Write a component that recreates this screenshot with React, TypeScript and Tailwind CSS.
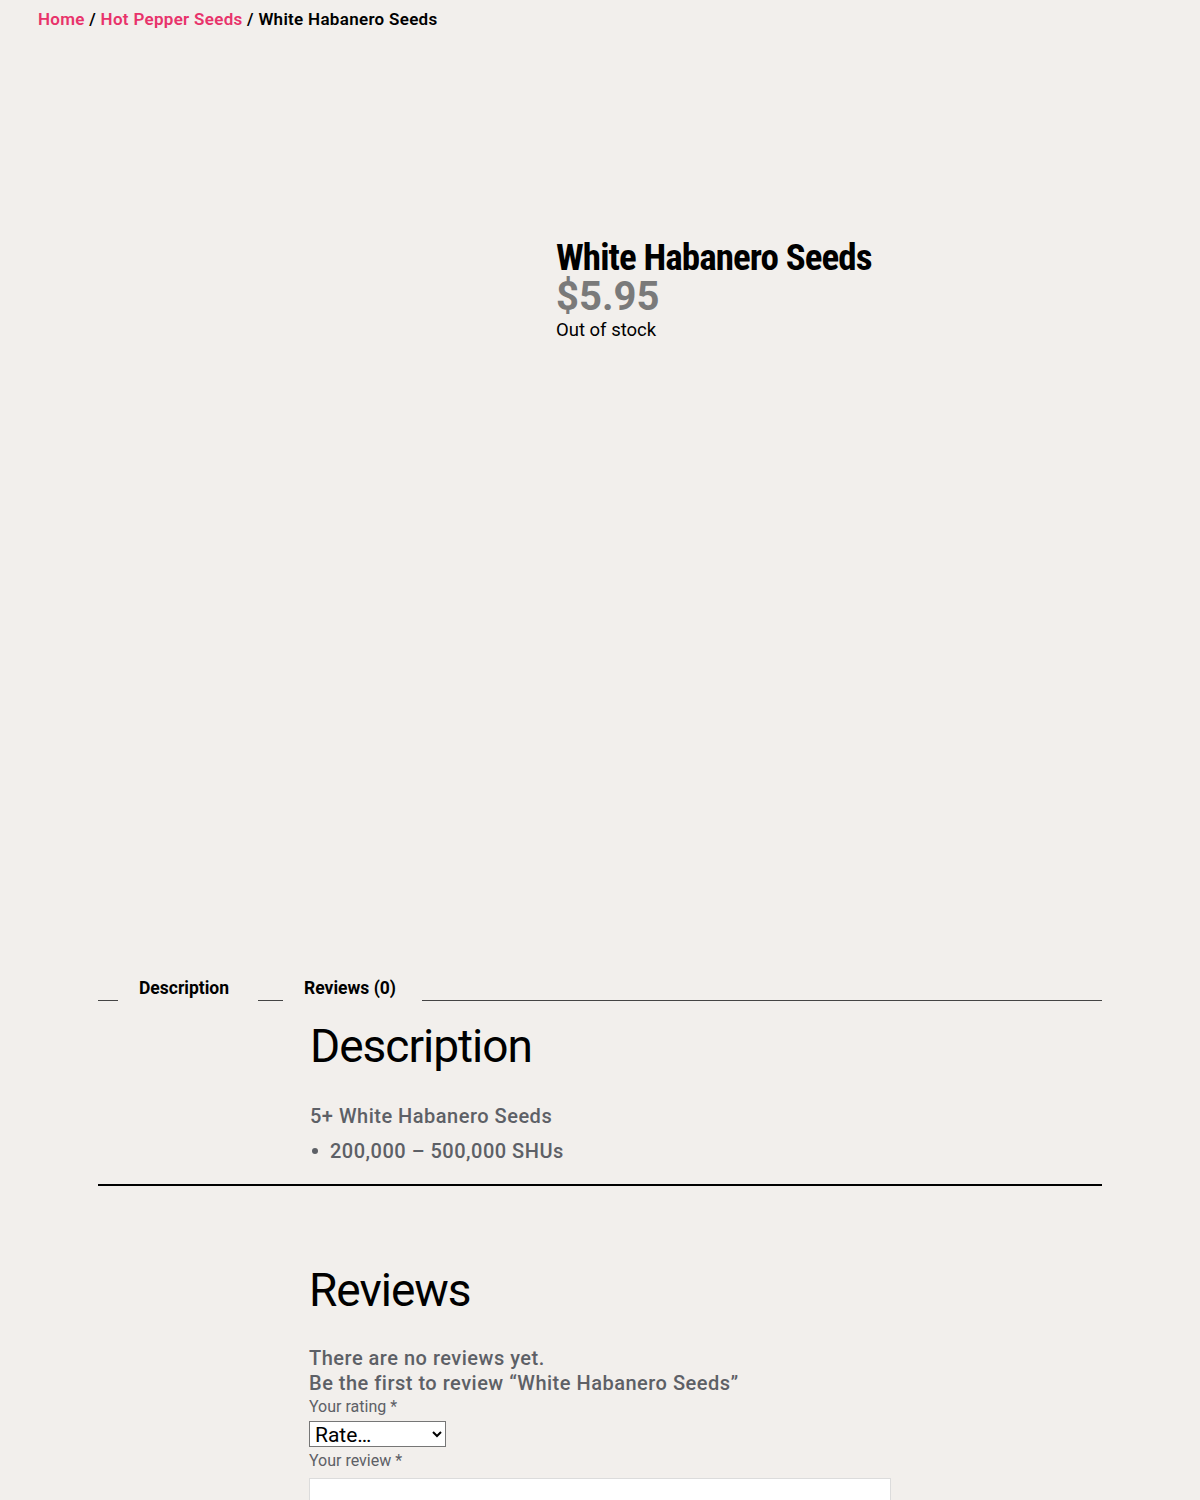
export default function App() {
  const body = { fontFamily: "Roboto, 'Liberation Sans', sans-serif" };
  return (
    <div className="min-h-[1500px] bg-[#f2efec] text-black" style={body}>
      <nav className="px-[38px] pt-[8px] text-[17px] font-semibold leading-[22px] tracking-[0.3px]">
        <a className="text-[#e8336b]">Home</a> / <a className="text-[#e8336b]">Hot Pepper Seeds</a> /{" "}
        <span>White Habanero Seeds</span>
      </nav>

      <section className="flex h-[947px] pt-[209px]">
        <div className="w-[556px] shrink-0" />
        <div>
          <h1
            className="text-[37px] font-bold leading-[38px] tracking-[-0.9px]"
            style={{ fontFamily: "'Liberation Sans Narrow', 'Roboto Condensed', 'Liberation Sans', sans-serif" }}
          >
            White Habanero Seeds
          </h1>
          <p className="text-[40px] font-bold leading-[40px] text-[#7a7a7a]">$5.95</p>
          <p className="mt-[1px] text-[18.5px] leading-[24px]">Out of stock</p>
        </div>
      </section>

      <div className="mx-[98px]">
        <ul className="flex items-end text-[17.5px] font-bold leading-[22px]">
          <li className="w-[20px] border-b border-[#444]" />
          <li className="w-[140px] pb-[2px] pl-[21px]">Description</li>
          <li className="w-[25px] border-b border-[#444]" />
          <li className="w-[139px] pb-[2px] pl-[21px]">Reviews (0)</li>
          <li className="flex-1 border-b border-[#444]" />
        </ul>

        <div className="border-b-2 border-black pb-[20px] pl-[212px]">
          <h2 className="mt-[18px] text-[46px] leading-[54px] tracking-[-1px]">Description</h2>
          <p className="mt-[30px] text-[20px] font-medium leading-[26px] tracking-[0.5px] text-[#5d6066]">
            5+ White Habanero Seeds
          </p>
          <ul className="mt-[9px] text-[20px] font-medium leading-[26px] tracking-[0.5px] text-[#5d6066]">
            <li className="flex items-center">
              <span className="mr-[12px] ml-[2px] h-[6px] w-[6px] rounded-full bg-[#5d6066]" />
              200,000 – 500,000 SHUs
            </li>
          </ul>
        </div>

        <div className="pl-[211px]">
          <h2 className="mt-[76px] text-[46px] leading-[56px] tracking-[-1px]">Reviews</h2>
          <p className="mt-[28px] text-[20px] font-medium leading-[25px] tracking-[0.5px] text-[#5d6066]">
            There are no reviews yet.
          </p>
          <p className="text-[20px] font-medium leading-[25px] tracking-[0.5px] text-[#5d6066]">
            Be the first to review “White Habanero Seeds”
          </p>
          <label className="block text-[16px] leading-[22px] text-[#5d6066]">Your rating *</label>
          <select className="mt-[3px] h-[26px] w-[137px] border border-[#767676] bg-white pl-[1px] text-[21px] leading-[24px]">
            <option>Rate…</option>
          </select>
          <label className="block text-[16px] leading-[24px] text-[#5d6066]">Your review *</label>
          <textarea className="mt-[5px] block h-[60px] w-[582px] border border-[#dcdcdc] bg-white" />
        </div>
      </div>
    </div>
  );
}
